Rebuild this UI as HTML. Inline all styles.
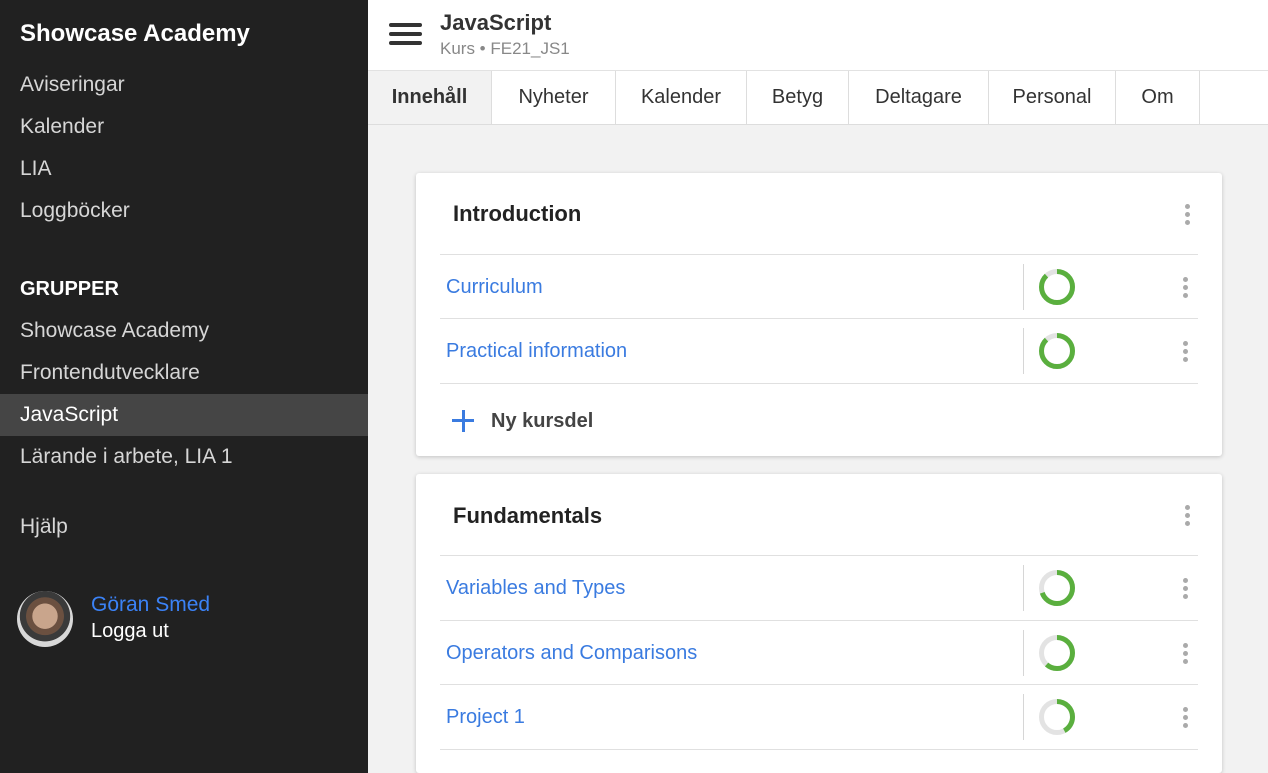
<!DOCTYPE html><html><head><meta charset="utf-8"><style>
*{box-sizing:border-box;margin:0;padding:0}
html,body{width:1268px;height:773px;overflow:hidden}
body{font-family:"Liberation Sans",sans-serif;background:#f2f2f2;position:relative}
.sb{position:absolute;left:0;top:0;width:368px;height:773px;background:#212121;color:#d6d6d6}
.sb .t{position:absolute;left:20px;top:20px;font-size:24px;font-weight:bold;color:#fff}
.sb .i{position:absolute;left:0;width:368px;height:42px;line-height:42px;padding-left:20px;font-size:21px}
.sb .act{background:#454545;color:#fff}
.hd{position:absolute;left:368px;top:0;right:0;height:71px;background:#fff;border-bottom:1px solid #e2e2e2}
.tabs{position:absolute;left:368px;top:71px;right:0;height:54px;background:#fff;border-bottom:1px solid #ddd}
.tab{position:absolute;top:0;height:53px;line-height:53px;text-align:center;font-size:20px;color:#333;border-right:1px solid #ddd}
.card{position:absolute;left:416px;width:806px;background:#fff;border-radius:3px;box-shadow:0 1px 4px rgba(0,0,0,.2)}
.ct{position:absolute;left:37px;font-size:22px;font-weight:bold;color:#222}
.row{position:absolute;left:24px;width:758px;border-top:1px solid #e0e0e0;height:65px}
.row a{position:absolute;left:6px;top:0;line-height:64px;font-size:20px;color:#3a7be0;text-decoration:none}
.row .sep{position:absolute;left:583px;top:9px;height:46px;border-left:1px solid #d6d6d6}
.row svg.r{position:absolute;left:598px;top:13px}
.dots{position:absolute;width:5px}
.dots i{display:block;width:5px;height:5px;border-radius:50%;background:#aaa;margin-bottom:3px}
</style></head><body>
<div class="sb">
<div class="t">Showcase Academy</div>
<div class="i" style="top:64px">Aviseringar</div>
<div class="i" style="top:106px">Kalender</div>
<div class="i" style="top:148px">LIA</div>
<div class="i" style="top:190px">Loggböcker</div>
<div class="i" style="top:268px;font-weight:bold;color:#fff;font-size:20px">GRUPPER</div>
<div class="i" style="top:310px">Showcase Academy</div>
<div class="i" style="top:352px">Frontendutvecklare</div>
<div class="i act" style="top:394px">JavaScript</div>
<div class="i" style="top:436px">Lärande i arbete, LIA 1</div>
<div class="i" style="top:506px">Hjälp</div>
<div style="position:absolute;left:17px;top:591px;width:56px;height:56px;border-radius:50%;background:radial-gradient(circle at 50% 45%,#c9a58c 0 30%,#6b5040 31% 45%,#3a3a3a 46% 60%,#d8d8d8 61%)"></div>
<div style="position:absolute;left:91px;top:593px;font-size:21px;color:#3b82f6">Göran Smed</div>
<div style="position:absolute;left:91px;top:620px;font-size:20px;color:#fff">Logga ut</div>
</div>
<div class="hd">
<div style="position:absolute;left:21px;top:23px;width:33px;height:4px;background:#333;border-radius:2px;box-shadow:0 9px 0 #333,0 18px 0 #333"></div>
<div style="position:absolute;left:72px;top:10px;font-size:22px;font-weight:bold;color:#333">JavaScript</div>
<div style="position:absolute;left:72px;top:39px;font-size:17px;color:#888">Kurs • FE21_JS1</div>
</div>
<div class="tabs">
<div class="tab" style="left:0;width:124px;background:#f2f2f2;font-weight:bold">Innehåll</div>
<div class="tab" style="left:124px;width:124px">Nyheter</div>
<div class="tab" style="left:248px;width:131px">Kalender</div>
<div class="tab" style="left:379px;width:102px">Betyg</div>
<div class="tab" style="left:481px;width:140px">Deltagare</div>
<div class="tab" style="left:621px;width:127px">Personal</div>
<div class="tab" style="left:748px;width:84px">Om</div>
</div>

<div class="card" style="top:173px;height:283px">
<div class="ct" style="top:28px">Introduction</div>
<div class="dots" style="left:769px;top:31px"><i></i><i></i><i></i></div>
<div class="row" style="top:81px"><a>Curriculum</a><div class="sep"></div>
<svg class="r" width="38" height="38"><circle cx="19" cy="19" r="15.5" fill="none" stroke="#e3e3e3" stroke-width="5"/><circle cx="19" cy="19" r="15.5" fill="none" stroke="#5aaf3e" stroke-width="5" stroke-dasharray="85.7 200" transform="rotate(-90 19 19)"/></svg>
<div class="dots" style="left:743px;top:22px"><i></i><i></i><i></i></div></div>
<div class="row" style="top:145px"><a>Practical information</a><div class="sep"></div>
<svg class="r" width="38" height="38"><circle cx="19" cy="19" r="15.5" fill="none" stroke="#e3e3e3" stroke-width="5"/><circle cx="19" cy="19" r="15.5" fill="none" stroke="#5aaf3e" stroke-width="5" stroke-dasharray="85.7 200" transform="rotate(-90 19 19)"/></svg>
<div class="dots" style="left:743px;top:22px"><i></i><i></i><i></i></div></div>
<div class="row" style="top:210px;height:73px"><div style="position:absolute;left:12px;top:35px;width:22px;height:3px;background:#3a7be0"></div><div style="position:absolute;left:21.5px;top:26px;width:3px;height:22px;background:#3a7be0"></div><div style="position:absolute;left:51px;top:26px;font-size:20px;font-weight:bold;color:#444">Ny kursdel</div></div>
</div>

<div class="card" style="top:474px;height:299px">
<div class="ct" style="top:29px">Fundamentals</div>
<div class="dots" style="left:769px;top:31px"><i></i><i></i><i></i></div>
<div class="row" style="top:81px"><a>Variables and Types</a><div class="sep"></div>
<svg class="r" width="38" height="38"><circle cx="19" cy="19" r="15.5" fill="none" stroke="#e3e3e3" stroke-width="5"/><circle cx="19" cy="19" r="15.5" fill="none" stroke="#5aaf3e" stroke-width="5" stroke-dasharray="68 200" transform="rotate(-90 19 19)"/></svg>
<div class="dots" style="left:743px;top:22px"><i></i><i></i><i></i></div></div>
<div class="row" style="top:146px"><a>Operators and Comparisons</a><div class="sep"></div>
<svg class="r" width="38" height="38"><circle cx="19" cy="19" r="15.5" fill="none" stroke="#e3e3e3" stroke-width="5"/><circle cx="19" cy="19" r="15.5" fill="none" stroke="#5aaf3e" stroke-width="5" stroke-dasharray="60 200" transform="rotate(-90 19 19)"/></svg>
<div class="dots" style="left:743px;top:22px"><i></i><i></i><i></i></div></div>
<div class="row" style="top:210px"><a>Project 1</a><div class="sep"></div>
<svg class="r" width="38" height="38"><circle cx="19" cy="19" r="15.5" fill="none" stroke="#e3e3e3" stroke-width="5"/><circle cx="19" cy="19" r="15.5" fill="none" stroke="#5aaf3e" stroke-width="5" stroke-dasharray="41 200" transform="rotate(-90 19 19)"/></svg>
<div class="dots" style="left:743px;top:22px"><i></i><i></i><i></i></div></div>
<div class="row" style="top:275px;height:24px"></div>
</div>
</body></html>
